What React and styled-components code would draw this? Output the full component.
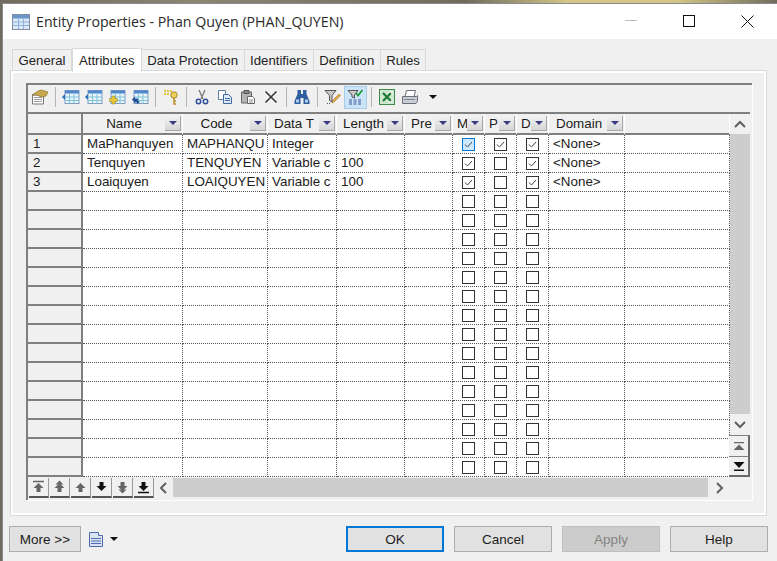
import React from 'react'
import styled, { createGlobalStyle } from 'styled-components'

const GlobalStyle = createGlobalStyle`
    html, body {
        margin: 0;
        padding: 0;
        overflow: hidden;
    }
    body {
        font-family: "Liberation Sans", Arial, sans-serif;
        font-size: 13.4px;
        color: #1c1c1c;
    }
`

const Screen = styled.div`
    width: 777px;
    height: 561px;
    padding: 3px 0 0 2px;
    box-sizing: border-box;
    background: linear-gradient(90deg, #6f6c5e 0, #8a8672 25%, #6f6c5e 60%, #d3c688 73%, #d3c688 87%, #6f6c5e 100%);
`

const Window = styled.div`
    height: 558px;
    background: #f0f0f0;
    border-top: 1px solid #8a8a8a;
    border-left: 1px solid #8a8a8a;
    box-sizing: border-box;
    display: flex;
    flex-direction: column;
`

const TitleBar = styled.div`
    height: 35px;
    flex: none;
    background: #fff;
    display: flex;
    align-items: center;
    padding-left: 9px;
    gap: 6px;
`

const Title = styled.div`
    font-family: "Open Sans", "Noto Sans", sans-serif;
    font-size: 14.2px;
    color: #2a2a2a;
    flex: 1;
    white-space: nowrap;
    margin-top: -1px;
`

const WinButton = styled.div`
    width: 58px;
    height: 35px;
    display: flex;
    align-items: center;
    justify-content: center;
    margin-left: -6px;
    margin-top: -1px;
    margin-right: ${({ $last }) => ($last ? '1px' : '0')};
`

const TabStrip = styled.div`
    display: flex;
    height: 24px;
    margin: 8px 0 0 9px;
    align-items: flex-end;
    position: relative;
    z-index: 1;
`

const Tab = styled.div`
    height: ${({ $active }) => ($active ? '24px' : '22px')};
    padding: 0 ${({ $active }) => ($active ? '6px' : '5.5px')};
    margin-bottom: ${({ $active }) => ($active ? '-1px' : '0')};
    background: ${({ $active }) => ($active ? '#fff' : '#f0f0f0')};
    border: 1px solid #d9d9d9;
    border-bottom: ${({ $active }) => ($active ? 'none' : '1px solid #d9d9d9')};
    border-left: ${({ $active, $first }) => ($active || $first ? '1px solid #d9d9d9' : 'none')};
    box-sizing: border-box;
    display: flex;
    align-items: center;
    white-space: nowrap;
    font-size: 13.2px;
    color: #222;
`

const Panel = styled.div`
    margin: -1px 10px 0 7px;
    height: 446px;
    border: 1px solid #d9d9d9;
    box-shadow: inset 0 0 0 2px #fff;
    box-sizing: border-box;
    padding: 12px 13px 0 15px;
    flex: none;
`

const GridFrame = styled.div`
    width: 726px;
    height: 417px;
    box-sizing: border-box;
    border-top: 2px solid #808080;
    border-left: 2px solid #808080;
    box-shadow: 1px 1px 0 #fff, 3px 3px 0 -1px #f0f0f0;
    display: flex;
    flex-direction: column;
`

const Toolbar = styled.div`
    height: 27px;
    flex: none;
    box-sizing: border-box;
    padding-bottom: 3px;
    display: flex;
    align-items: center;
`

const Tool = styled.div`
    width: 23px;
    height: 23px;
    flex: none;
    display: flex;
    align-items: center;
    justify-content: center;
    box-sizing: border-box;
    background: ${({ $on }) => ($on ? '#cce4f7' : 'transparent')};
    border: 1px solid ${({ $on }) => ($on ? '#a8cdea' : 'transparent')};
`

const ToolSep = styled.div`
    width: 8px;
    height: 20px;
    flex: none;
    background: linear-gradient(#b4b4b4, #b4b4b4) center / 1px 100% no-repeat;
`

const GridBody = styled.div`
    display: grid;
    grid-template-columns: 702px 20px;
    border-top: 2px solid #808080;
    width: 722px;
`

const Table = styled.div`
    display: grid;
    grid-template-columns: 55px 100px 85px 69px 68px 48px 32px 32px 32px 76px 105px;
    grid-template-rows: 21px repeat(18, 19px);
    background: #fff;
`

const HeadCorner = styled.div`
    background: #f0f0f0;
    border-right: 2px solid #808080;
    border-bottom: 2px solid #808080;
    box-sizing: border-box;
`

const HeadCell = styled.div`
    background: #f0f0f0;
    border-right: 1px solid #fff;
    border-bottom: 2px solid #808080;
    box-sizing: border-box;
    display: flex;
    align-items: center;
    padding-right: 1px;
    overflow: hidden;
`

const HeadLabel = styled.span`
    flex: 1;
    min-width: 0;
    text-align: ${({ $pad }) => ($pad ? 'left' : 'center')};
    padding-left: ${({ $pad }) => $pad || 0}px;
    white-space: nowrap;
    overflow: hidden;
`

const DropButton = styled.div`
    width: 16px;
    height: 15px;
    flex: none;
    background: linear-gradient(#f2f2f2, #d6d6d6);
    border-right: 1px solid #a8a8a8;
    border-bottom: 1px solid #a8a8a8;
    box-sizing: border-box;
    display: flex;
    align-items: center;
    justify-content: center;

    &::after {
        content: '';
        border-left: 4px solid transparent;
        border-right: 4px solid transparent;
        border-top: 4px solid #3b3a86;
    }
`

const RowHead = styled.div`
    background: #f0f0f0;
    border-right: 2px solid #808080;
    border-bottom: 2px solid #808080;
    box-sizing: border-box;
    padding-left: 5px;
    line-height: 17px;
`

const Cell = styled.div`
    border-right: 1px dotted #555;
    border-bottom: 1px dotted #555;
    box-sizing: border-box;
    padding-left: 4px;
    line-height: 18px;
    white-space: nowrap;
    overflow: hidden;
`

const CheckCell = styled(Cell)`
    padding: 0;
    display: flex;
    align-items: center;
    justify-content: center;
`

const Check = styled.div`
    width: 13px;
    height: 13px;
    box-sizing: border-box;
    background: ${({ $focus }) => ($focus ? '#cce8ff' : '#fff')};
    border: 1px solid ${({ $focus }) => ($focus ? '#0078d7' : '#333')};
    display: flex;
`

const VScroll = styled.div`
    display: flex;
    flex-direction: column;
    background: #f0f0f0;
    height: 365px;
`

const ScrollArrow = styled.div`
    flex: none;
    height: ${({ $h }) => $h || 20}px;
    display: flex;
    align-items: center;
    justify-content: center;
`

const VThumb = styled.div`
    height: 280px;
    flex: none;
    background: #cdcdcd;
`

const JumpButton = styled.div`
    height: 21px;
    flex: none;
    width: 21px;
    margin-left: -1px;
    background: #f0f0f0;
    border-top: 1px solid #808080;
    border-right: 2px solid #6a6a6a;
    border-bottom: ${({ $last }) => ($last ? '2px solid #6a6a6a' : 'none')};
    box-sizing: border-box;
    display: flex;
    align-items: center;
    justify-content: center;
`

const NavRow = styled.div`
    display: flex;
    height: 20px;
    width: 702px;
    margin-top: 1px;
`

const NavButton = styled.div`
    width: 20px;
    height: 20px;
    flex: none;
    margin-left: 1px;
    background: #f0f0f0;
    border-bottom: 2px solid #555;
    border-right: 1px solid #999;
    box-sizing: border-box;
    display: flex;
    align-items: center;
    justify-content: center;
`

const HScroll = styled.div`
    flex: 1;
    display: flex;
    align-items: center;
    background: #f0f0f0;
    height: 19px;
`

const HThumb = styled.div`
    flex: 1;
    height: 19px;
    background: #cdcdcd;
`

const HArrow = styled.div`
    width: ${({ $w }) => $w}px;
    flex: none;
    display: flex;
    align-items: center;
    justify-content: center;
`

const ButtonBar = styled.div`
    display: flex;
    align-items: center;
    margin: 10px 0 0 6px;
`

const DialogButton = styled.div`
    height: 26px;
    width: ${({ $w }) => $w || 98}px;
    margin-left: ${({ $ml }) => $ml || 0}px;
    box-sizing: border-box;
    background: ${({ $off }) => ($off ? '#cccccc' : '#e1e1e1')};
    border: ${({ $def }) => ($def ? '2px solid #0078d7' : '1px solid #adadad')};
    border-color: ${({ $off }) => ($off ? '#bfbfbf' : undefined)};
    color: ${({ $off }) => ($off ? '#838383' : '#1c1c1c')};
    display: flex;
    align-items: center;
    justify-content: center;
    font-size: 13.5px;
`

const ReportMenu = styled.div`
    display: flex;
    align-items: center;
    margin-left: 8px;
    width: 257px;
    gap: 7px;
`

const Caret = styled.div`
    border-left: 4px solid transparent;
    border-right: 4px solid transparent;
    border-top: 4px solid #111;
    margin-top: ${({ $mt }) => $mt || 0}px;
`

const GridIcon = ({ arrow, plus, swap }) => (
    <svg width="18" height="16" viewBox="0 0 18 16">
        <rect x="3" y="1.500" width="14" height="13" fill="#e8f4fa" stroke="#7f9cc0" />
        <rect x="3" y="1.500" width="14" height="3" fill="#4f86cc" />
        <path d="M3 8h14M3 11.500h14M7.500 4.500v10M12 4.500v10" stroke="#7cc4d4" />
        {arrow && <path d="M0 8l3-3v6z" fill="#2a6fc0" />}
        {plus && <path d="M4 7h3v2.500h2.500v3H7V15H4v-2.500H1.500v-3H4z" fill="#e8c838" stroke="#9a8420" strokeWidth=".5" />}
        {swap && <path d="M1 10.500l3-3v2h3v2H4v2zM9 12.500l-3 3v-2H3v-2h3" fill="#24509a" />}
    </svg>
)

const PropsIcon = () => (
    <svg width="18" height="16" viewBox="0 0 18 16">
        <path d="M1.500 6h11v9h-11z" fill="#fff" stroke="#777" />
        <path d="M3 8.500h8M3 10.500h8M3 12.500h8" stroke="#9a9a9a" />
        <path d="M1 6l6-4 3-1 7 2-2 4-5 1-4-2z" fill="#c9a94c" stroke="#7b6424" strokeWidth=".6" />
    </svg>
)

const KeyIcon = () => (
    <svg width="16" height="16" viewBox="0 0 16 16">
        <path d="M1 1h2v2H1zM4 1h2v2H4zM1 4h2v2H1zM7 1h2v2H7zM4 4h2v2H4z" fill="#e3c743" />
        <circle cx="11" cy="6" r="3.200" fill="#f0d25a" stroke="#a8862a" />
        <path d="M11 9v6h2M11 12h2" stroke="#b8902c" strokeWidth="1.500" fill="none" />
    </svg>
)

const ScissorsIcon = () => (
    <svg width="14" height="16" viewBox="0 0 14 16">
        <path d="M4 1l4 9M10 1L6 10" stroke="#777" strokeWidth="1.300" />
        <circle cx="3.500" cy="12.500" r="2.200" fill="none" stroke="#2d4f9a" strokeWidth="1.500" />
        <circle cx="10.500" cy="12.500" r="2.200" fill="none" stroke="#2d4f9a" strokeWidth="1.500" />
    </svg>
)

const CopyIcon = () => (
    <svg width="16" height="16" viewBox="0 0 16 16">
        <path d="M1.500 1.500h7v9h-7z" fill="#fff" stroke="#5f7fa8" />
        <path d="M6.500 5.500h5l3 3v6h-8z" fill="#dfeaf6" stroke="#3f6aa8" />
        <path d="M8 9.500h5M8 11.500h5" stroke="#3f6aa8" />
    </svg>
)

const PasteIcon = () => (
    <svg width="16" height="16" viewBox="0 0 16 16">
        <path d="M1.500 3h10v11h-10z" fill="#b5b5b5" stroke="#666" />
        <path d="M4 1.500h5v3H4z" fill="#888" stroke="#555" />
        <path d="M7.500 7.500h5l2 2v5h-7z" fill="#fff" stroke="#666" />
        <path d="M9 11h4M9 13h4" stroke="#888" />
    </svg>
)

const CrossIcon = () => (
    <svg width="14" height="14" viewBox="0 0 14 14">
        <path d="M1.500 1.500l11 11M12.500 1.500l-11 11" stroke="#333" strokeWidth="1.500" />
    </svg>
)

const BinocularsIcon = () => (
    <svg width="16" height="16" viewBox="0 0 16 16">
        <path d="M3.500 1h3.500v4h2V1h3.500v4L15.500 12v3H9.500V9h-3v6H.5v-3L3.500 5z" fill="#2f5f9e" />
        <path d="M2 10.500h3v3H2zM11 10.500h3v3h-3z" fill="#b4d0ee" />
    </svg>
)

const FilterEditIcon = () => (
    <svg width="17" height="16" viewBox="0 0 17 16">
        <path d="M1 1.500h11L8 6.500V13L5.500 11.500v-5z" fill="#c9c9c9" stroke="#555" />
        <path d="M8 14l1-3 6-6 1.500 1.500-6 6z" fill="#e2b04a" stroke="#9c6d1e" strokeWidth=".6" />
        <path d="M3 14.500h1M5 14.500h1" stroke="#555" />
    </svg>
)

const FilterCheckIcon = () => (
    <svg width="17" height="16" viewBox="0 0 17 16">
        <path d="M1 1.500h10L7.500 6v3L5 8V6z" fill="#c9c9c9" stroke="#555" />
        <path d="M9 4l2 2.500L15.500 1" stroke="#1f9a3a" strokeWidth="1.800" fill="none" />
        <path d="M2 11h3M6.500 11h3M11 11h3M2 13h3M6.500 13h3M11 13h3M2 15h3M6.500 15h3M11 15h3" stroke="#3a5a9a" />
    </svg>
)

const ExcelIcon = () => (
    <svg width="16" height="16" viewBox="0 0 16 16">
        <rect x=".5" y=".5" width="15" height="15" fill="#cfe6cf" stroke="#3d8a4a" />
        <path d="M4 4l8 8M12 4l-8 8" stroke="#1c7a34" strokeWidth="2.200" />
        <path d="M10 3h3v3M10 13h3v-3" stroke="#fff" strokeWidth=".8" fill="none" />
    </svg>
)

const PrinterIcon = () => (
    <svg width="16" height="16" viewBox="0 0 16 16">
        <path d="M4.500 1.500h9l-1.500 6h-9z" fill="#fff" stroke="#6a6f7a" />
        <path d="M.5 7.500h14l1 -1v6l-1.500 2H.5z" fill="#c8ccd4" stroke="#6a6f7a" />
        <path d="M2 10.500h11" stroke="#7d8592" />
    </svg>
)

const ReportIcon = () => (
    <svg width="14" height="15" viewBox="0 0 14 15">
        <path d="M.5.500h9v3h4v11H.5z" fill="#dbe5f4" stroke="#4a6bb0" />
        <path d="M2 6.500h10M2 9h10M2 11.500h10" stroke="#4a6bb0" />
    </svg>
)

const NavIcon = ({ dir, bar, double, grey }) => {
    const fill = grey ? '#666' : '#111'
    const tri = dir === 'up' ? 'M6.500 3l5 5h-3v4h-4V8h-3z' : 'M4.500 2h4v4h3l-5 5-5-5h3z'
    return (
        <svg width="13" height="14" viewBox="0 0 13 14">
            <path d={tri} fill={fill} />
            {bar && <path d={dir === 'up' ? 'M1 1.500h11' : 'M1 12.500h11'} stroke={fill} strokeWidth="1.500" />}
            {double && <path d={dir === 'up' ? 'M6.500 .500l4 4h-8z' : 'M2.500 9.500h8l-4 4z'} fill={fill} />}
        </svg>
    )
}

const JumpIcon = ({ dir }) => (
    <svg width="12" height="11" viewBox="0 0 12 11">
        {dir === 'up' ? (
            <path d="M1 1h10v1.200H1zM6 3.500l5.500 5.500H.5z" fill="#666" />
        ) : (
            <path d="M.5 1h11L6 7zM1 8.500h10V10H1z" fill="#111" />
        )}
    </svg>
)

const Chevron = ({ dir }) => {
    const d = {
        up: 'M1 7l5-5 5 5',
        down: 'M1 2l5 5 5-5',
        left: 'M7 1L2 6l5 5',
        right: 'M2 1l5 5-5 5',
    }[dir]
    const wide = dir === 'up' || dir === 'down'
    return (
        <svg width={wide ? 12 : 9} height={wide ? 9 : 12} viewBox={wide ? '0 0 12 9' : '0 0 9 12'}>
            <path d={d} fill="none" stroke="#606060" strokeWidth="2" />
        </svg>
    )
}

const TickMark = () => (
    <svg width="11" height="11" viewBox="0 0 11 11">
        <path d="M2 5.500l2.500 2.500L9 3" fill="none" stroke="#444" strokeWidth="1" />
    </svg>
)

const columns = [
    { label: 'Name' },
    { label: 'Code' },
    { label: 'Data T', pad: 6 },
    { label: 'Length', pad: 6 },
    { label: 'Pre', pad: 6 },
    { label: 'M', pad: 4 },
    { label: 'P', pad: 4 },
    { label: 'D', pad: 4 },
    { label: 'Domain', pad: 7 },
]

const rows = [
    { name: 'MaPhanquyen', code: 'MAPHANQU', type: 'Integer', length: '', m: true, p: true, d: true, domain: '<None>' },
    { name: 'Tenquyen', code: 'TENQUYEN', type: 'Variable c', length: '100', m: true, p: false, d: true, domain: '<None>' },
    { name: 'Loaiquyen', code: 'LOAIQUYEN', type: 'Variable c', length: '100', m: true, p: false, d: true, domain: '<None>' },
    ...Array.from({ length: 15 }, () => ({ name: '', code: '', type: '', length: '', m: false, p: false, d: false, domain: '' })),
]

const tabs = ['General', 'Attributes', 'Data Protection', 'Identifiers', 'Definition', 'Rules']

const Box = ({ on, focus }) => (
    <CheckCell>
        <Check $focus={focus}>{on && <TickMark />}</Check>
    </CheckCell>
)

const App = () => (
    <Screen>
        <GlobalStyle />
        <Window>
            <TitleBar>
                <svg width="18" height="16" viewBox="0 0 18 16">
                    <rect x=".5" y=".5" width="17" height="15" fill="#dbe9f6" stroke="#7f8fa8" />
                    <rect x="1" y="1" width="16" height="3.500" fill="#6d96c8" />
                    <path d="M1 8h16M1 11.500h16M6.500 4.500V15M11.500 4.500V15" stroke="#8fb2d8" />
                </svg>
                <Title>Entity Properties - Phan Quyen (PHAN_QUYEN)</Title>
                <WinButton>
                    <svg width="12" height="2"><path d="M0 .5h12" stroke="#bcbcbc" /></svg>
                </WinButton>
                <WinButton>
                    <svg width="12" height="12"><rect x=".5" y=".5" width="11" height="11" fill="none" stroke="#111" /></svg>
                </WinButton>
                <WinButton $last>
                    <svg width="13" height="13"><path d="M.5.500l12 12M12.500.500l-12 12" stroke="#111" /></svg>
                </WinButton>
            </TitleBar>
            <TabStrip>
                {tabs.map((t, i) => (
                    <Tab key={t} $first={i === 0} $active={t === 'Attributes'}>{t}</Tab>
                ))}
            </TabStrip>
            <Panel>
                <GridFrame>
                    <Toolbar>
                        <Tool><PropsIcon /></Tool>
                        <ToolSep />
                        <Tool><GridIcon arrow /></Tool>
                        <Tool><GridIcon arrow /></Tool>
                        <Tool><GridIcon plus /></Tool>
                        <Tool><GridIcon swap /></Tool>
                        <ToolSep />
                        <Tool><KeyIcon /></Tool>
                        <ToolSep />
                        <Tool><ScissorsIcon /></Tool>
                        <Tool><CopyIcon /></Tool>
                        <Tool><PasteIcon /></Tool>
                        <Tool><CrossIcon /></Tool>
                        <ToolSep />
                        <Tool><BinocularsIcon /></Tool>
                        <ToolSep />
                        <Tool><FilterEditIcon /></Tool>
                        <Tool $on><FilterCheckIcon /></Tool>
                        <ToolSep />
                        <Tool><ExcelIcon /></Tool>
                        <Tool><PrinterIcon /></Tool>
                        <Tool><Caret /></Tool>
                    </Toolbar>
                    <GridBody>
                        <div>
                            <Table>
                                <HeadCorner />
                                {columns.map((c) => (
                                    <HeadCell key={c.label}>
                                        <HeadLabel $pad={c.pad}>{c.label}</HeadLabel>
                                        <DropButton />
                                    </HeadCell>
                                ))}
                                <HeadCell />
                                {rows.map((r, i) => (
                                    <React.Fragment key={i}>
                                        <RowHead>{i < 3 ? i + 1 : ''}</RowHead>
                                        <Cell>{r.name}</Cell>
                                        <Cell>{r.code}</Cell>
                                        <Cell>{r.type}</Cell>
                                        <Cell>{r.length}</Cell>
                                        <Cell />
                                        <Box on={r.m} focus={i === 0} />
                                        <Box on={r.p} />
                                        <Box on={r.d} />
                                        <Cell>{r.domain}</Cell>
                                        <Cell />
                                    </React.Fragment>
                                ))}
                            </Table>
                            <NavRow>
                                <NavButton><NavIcon dir="up" bar grey /></NavButton>
                                <NavButton><NavIcon dir="up" double grey /></NavButton>
                                <NavButton><NavIcon dir="up" grey /></NavButton>
                                <NavButton><NavIcon dir="down" /></NavButton>
                                <NavButton><NavIcon dir="down" double grey /></NavButton>
                                <NavButton><NavIcon dir="down" bar /></NavButton>
                                <HScroll>
                                    <HArrow $w={19}><Chevron dir="left" /></HArrow>
                                    <HThumb />
                                    <HArrow $w={22}><Chevron dir="right" /></HArrow>
                                </HScroll>
                            </NavRow>
                        </div>
                        <VScroll>
                            <ScrollArrow $h={20}><Chevron dir="up" /></ScrollArrow>
                            <VThumb />
                            <ScrollArrow $h={21}><Chevron dir="down" /></ScrollArrow>
                            <JumpButton><JumpIcon dir="up" /></JumpButton>
                            <JumpButton $last><JumpIcon dir="down" /></JumpButton>
                        </VScroll>
                    </GridBody>
                </GridFrame>
            </Panel>
            <ButtonBar>
                <DialogButton $w={72}>More &gt;&gt;</DialogButton>
                <ReportMenu>
                    <ReportIcon />
                    <Caret />
                </ReportMenu>
                <DialogButton $def>OK</DialogButton>
                <DialogButton $ml={10}>Cancel</DialogButton>
                <DialogButton $ml={10} $off>Apply</DialogButton>
                <DialogButton $ml={10}>Help</DialogButton>
            </ButtonBar>
        </Window>
    </Screen>
)

export default App
